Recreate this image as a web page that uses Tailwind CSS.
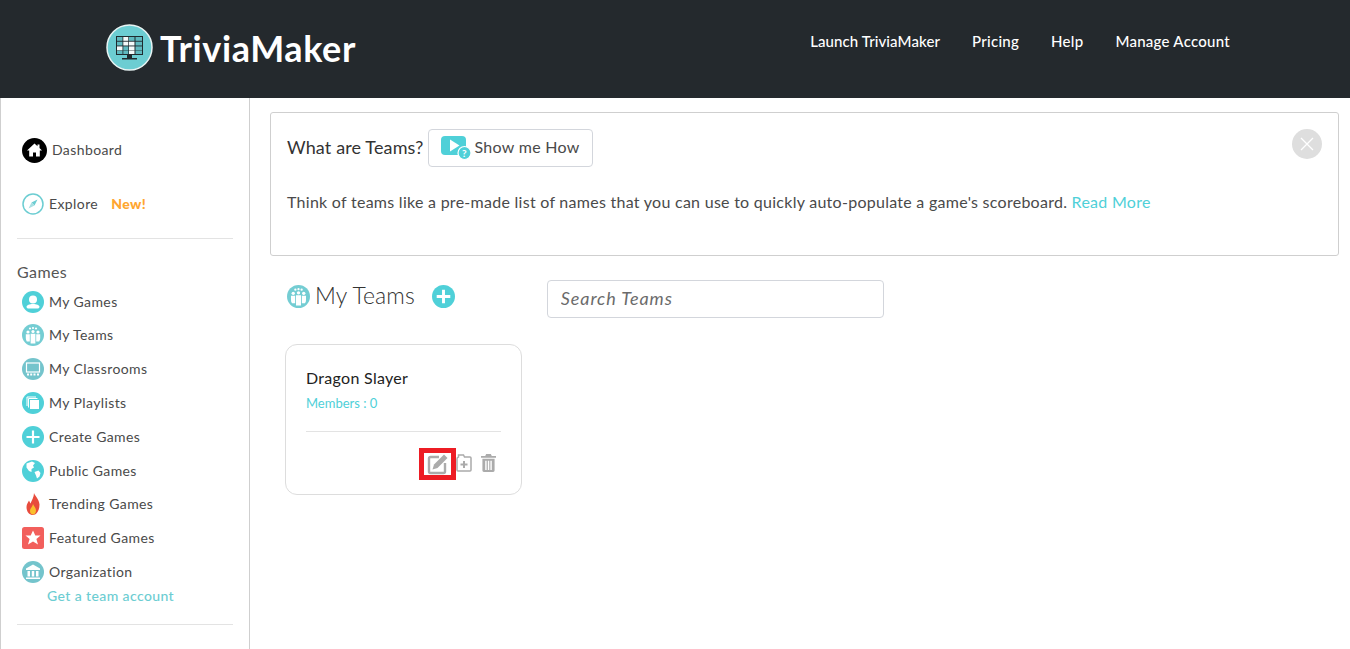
<!DOCTYPE html>
<html lang="en">
<head>
  <meta charset="UTF-8" />
  <title>My Teams - TriviaMaker</title>
  <script src="https://cdn.jsdelivr.net/npm/@tailwindcss/browser@4"></script>
</head>
<body class="h-[649px] overflow-hidden bg-white font-['Lato',sans-serif] text-[#4a4a4a]">

  <!-- Header -->
  <header class="h-[98px] bg-[#24292d] flex items-center justify-between pl-[106px] pr-[120px]">
    <a class="flex items-center gap-[7px] mb-[3px]">
      <svg width="47" height="47" viewBox="0 0 47 47">
        <circle cx="23.5" cy="23.5" r="22.5" fill="#6ccdd2" stroke="#e8f4f4" stroke-width="1.5"/>
        <rect x="10" y="12" width="27" height="19" fill="#1f2a2e"/>
        <g fill="#5fb9bf">
          <rect x="11" y="13" width="5.500" height="3.800"/><rect x="23" y="13" width="5.500" height="3.800"/><rect x="29.500" y="13" width="6.500" height="3.800"/>
          <rect x="11" y="17.700" width="5.500" height="3.800"/><rect x="29.500" y="17.700" width="6.500" height="3.800"/>
          <rect x="17.300" y="22.400" width="5" height="3.800"/><rect x="29.500" y="22.400" width="6.500" height="3.800"/>
          <rect x="11" y="26.500" width="5.500" height="3.500"/><rect x="17.300" y="26.500" width="5" height="3.500"/><rect x="29.500" y="26.500" width="6.500" height="3.500"/>
        </g>
        <g fill="#f4fafa">
          <rect x="17.300" y="13" width="5" height="3.800"/>
          <rect x="17.300" y="17.700" width="5" height="3.800"/><rect x="23" y="17.700" width="5.500" height="3.800"/>
          <rect x="11" y="22.400" width="5.500" height="3.800"/><rect x="23" y="22.400" width="5.500" height="3.800"/>
          <rect x="23" y="26.500" width="5.500" height="3.500"/>
        </g>
        <rect x="21" y="31" width="5" height="3" fill="#1f2a2e"/>
        <rect x="16" y="34" width="15" height="1.500" fill="#1f2a2e"/>
      </svg>
      <span class="text-[36px] font-bold text-white leading-none tracking-[0.6px]">TriviaMaker</span>
    </a>
    <nav class="flex items-center gap-8 text-[15px] font-medium text-white tracking-[0.27px] mb-[15px]">
      <a class="tracking-[0.1px]">Launch TriviaMaker</a>
      <a>Pricing</a>
      <a>Help</a>
      <a>Manage Account</a>
    </nav>
  </header>

  <div class="flex h-[551px]">

    <!-- Sidebar -->
    <aside class="w-[250px] shrink-0 border-l border-r border-[#cfcfcf] pl-[16px] pr-4 text-[14px] tracking-[0.4px]">
      <a class="flex items-center gap-[5px] h-[26px] mt-[39px] pl-[5px]">
        <svg width="25" height="25" viewBox="0 0 25 25"><circle cx="12.500" cy="12.500" r="12.500" fill="#000"/><path d="M12.500 5.500 5 12.500h2.200v6h3.800v-4h3v4h3.800v-6H20l-2.500-2.400V6.500h-2v1.700z" fill="#fff"/></svg>
        <span class="pb-[2px]">Dashboard</span>
      </a>
      <a class="flex items-center gap-[5px] h-[24px] mt-[29px] pl-[5px]">
        <svg width="22" height="22" viewBox="0 0 22 22"><circle cx="11" cy="11" r="10" fill="none" stroke="#6ccdd2" stroke-width="1.500"/><path d="M15.500 6.500 12.500 12.500 9.500 9.500z" fill="#6ccdd2"/><path d="M6.500 15.500 9.500 9.500 12.500 12.500z" fill="#a9e0e3"/></svg>
        <span class="pb-[2px]">Explore</span>
        <span class="ml-[8px] pb-[2px] font-black text-[#ffa630]">New!</span>
      </a>
      <div class="h-px bg-[#e3e3e3] mt-[22px]"></div>
      <h3 class="text-[16px] leading-5 mt-[23px] text-[#555]">Games</h3>

      <ul class="mt-[9px] pl-[5px]">
        <li class="flex items-center gap-[5px] h-[22px]">
          <svg width="22" height="22" viewBox="0 0 22 22"><circle cx="11" cy="11" r="11" fill="#4fd0d8"/><circle cx="11" cy="8.500" r="4" fill="#fff"/><path d="M4.500 16c0-2 3-3 6.500-3s6.500 1 6.500 3c0 .8-1 1.500-2 1.500h-9c-1 0-2-.7-2-1.500z" fill="#fff"/></svg>
          <span class="pb-[2px]">My Games</span>
        </li>
        <li class="flex items-center gap-[5px] h-[22px] mt-[11px]">
          <svg width="22" height="22" viewBox="0 0 22 22"><circle cx="11" cy="11" r="11" fill="#74cdd3"/><g fill="#fff"><circle cx="8" cy="4.500" r="1.100"/><circle cx="11" cy="4" r="1.100"/><circle cx="14" cy="4.500" r="1.100"/><circle cx="6" cy="8" r="1.600"/><circle cx="11" cy="7.500" r="1.600"/><circle cx="16" cy="8" r="1.600"/><path d="M3.800 10.200h4v7.300h-3c-.7-1-1-2.200-1-3.500zM8.600 9.800h4.800v9.700H8.600zM14.200 10.200h4V14c0 1.300-.3 2.500-1 3.500h-3z"/></g></svg>
          <span class="pb-[2px]">My Teams</span>
        </li>
        <li class="flex items-center gap-[5px] h-[22px] mt-[12px]">
          <svg width="22" height="22" viewBox="0 0 22 22"><circle cx="11" cy="11" r="11" fill="#74c4cc"/><rect x="4.500" y="5" width="13" height="9" fill="none" stroke="#fff" stroke-width="1.200"/><path d="M5 15.500h2v2H5zM8.200 15.500h2v2h-2zM11.500 15.500h2v2h-2zM15 15.500h2v2h-2z" fill="#fff"/></svg>
          <span class="pb-[2px]">My Classrooms</span>
        </li>
        <li class="flex items-center gap-[5px] h-[22px] mt-[12px]">
          <svg width="22" height="22" viewBox="0 0 22 22"><circle cx="11" cy="11" r="11" fill="#4fd0d8"/><path d="M5 14V5h9" fill="none" stroke="#fff" stroke-width="1"/><path d="M6.500 15.500V6.500h9" fill="none" stroke="#fff" stroke-width="1"/><rect x="8" y="8" width="9" height="9" fill="#fff"/></svg>
          <span class="pb-[2px]">My Playlists</span>
        </li>
        <li class="flex items-center gap-[5px] h-[22px] mt-[12px]">
          <svg width="22" height="22" viewBox="0 0 22 22"><circle cx="11" cy="11" r="11" fill="#4fd0d8"/><path d="M11 4.500v13M4.500 11h13" stroke="#fff" stroke-width="2.200"/></svg>
          <span class="pb-[2px]">Create Games</span>
        </li>
        <li class="flex items-center gap-[5px] h-[22px] mt-[12px]">
          <svg width="22" height="22" viewBox="0 0 22 22"><circle cx="11" cy="11" r="11" fill="#4fd0d8"/><path d="M4.500 3.500 10 1.500l3 1.500-2 2.500 1 2-2.500 1.500v3L7 11 4.500 7.500zM12.500 12l4-1.500 2 2.500-1 3.500-2.500 2-1-3z" fill="#fff"/></svg>
          <span class="pb-[2px]">Public Games</span>
        </li>
        <li class="flex items-center gap-[5px] h-[22px] mt-[11px]">
          <svg width="22" height="22" viewBox="0 0 22 22"><path d="M12 0c1 3 5 6 5.500 11.500 0 6-3 10.500-6.500 10.500s-6.500-3-6.500-8c0-3 1.500-4.500 2.500-6.500l1.500 3C9.500 7.500 12 4 12 0z" fill="#e84c3d"/><path d="M11 11c.5 2 3 3.500 3 6.500 0 2.500-1.500 4-3 4s-3-1.500-3-3.500c0-3 2.500-4 3-7z" fill="#f9c02d"/></svg>
          <span class="pb-[2px]">Trending Games</span>
        </li>
        <li class="flex items-center gap-[5px] h-[22px] mt-[12px]">
          <svg width="22" height="22" viewBox="0 0 22 22"><rect width="22" height="22" rx="2.500" fill="#f25f5c"/><path d="m11 3.500 2.300 5h5.200l-4.100 3.500 1.600 5.500-5-3.100-5 3.100 1.600-5.500L3.500 8.500h5.200z" fill="#fff"/></svg>
          <span class="pb-[2px]">Featured Games</span>
        </li>
        <li class="flex items-center gap-[5px] h-[22px] mt-[12px]">
          <svg width="22" height="22" viewBox="0 0 22 22"><circle cx="11" cy="11" r="11" fill="#74c4cc"/><path d="M11 3.500 4 7.500v1.500h14V7.500zM5.500 10h2.500v5.500H5.500zM9.800 10h2.400v5.500H9.800zM14 10h2.500v5.500H14zM4 16.500h14v1.500H4z" fill="#fff"/></svg>
          <span class="pb-[2px]">Organization</span>
        </li>
      </ul>
      <a class="block pl-[30px] mt-[4px] leading-[18px] text-[#6ccdd2] font-medium">Get a team account</a>
      <div class="h-px bg-[#e3e3e3] mt-[19px]"></div>
    </aside>

    <!-- Main -->
    <main class="flex-1 pl-5 pr-[11px] pt-[14px]">
      <section class="relative h-[144px] border border-[#cfcfcf] rounded-[3px] pl-4 pt-4">
        <div class="flex items-center gap-[5px]">
          <span class="text-[18px] tracking-[0.13px] text-[#333] pb-[2px]">What are Teams?</span>
          <button class="h-[38px] pl-3 pr-[12px] pb-[2px] flex items-center gap-[3px] border border-[#d3d6dc] rounded-[4px] text-[16px] tracking-[0.3px]">
            <svg class="mt-[2px]" width="30" height="25" viewBox="0 0 30 25"><rect width="25" height="19" rx="4" fill="#4fd0d8"/><path d="M9 3.500v12l9.500-6z" fill="#fff"/><circle cx="23.500" cy="17" r="6.500" fill="#4fd0d8" stroke="#fff" stroke-width="1.200"/><text x="23.500" y="20.500" text-anchor="middle" font-size="10" font-weight="700" fill="#fff">?</text></svg>
            Show me How
          </button>
        </div>
        <p class="mt-[23px] text-[16px] leading-6 tracking-[0.27px]">Think of teams like a pre-made list of names that you can use to quickly auto-populate a game's scoreboard. <a class="text-[#4fd0d8]">Read More</a></p>
        <button class="absolute top-4 right-4 w-[30px] h-[30px] rounded-full bg-[#dedede] flex items-center justify-center">
          <svg width="16" height="16" viewBox="0 0 16 16"><path d="M2 2l12 12M14 2 2 14" stroke="#fff" stroke-width="1.300"/></svg>
        </button>
      </section>

      <div class="flex items-start mt-[24px] pl-[17px]">
        <div class="flex items-center h-[32px]">
          <svg width="23" height="23" viewBox="0 0 22 22"><circle cx="11" cy="11" r="11" fill="#74cdd3"/><g fill="#fff"><circle cx="8" cy="4.500" r="1.100"/><circle cx="11" cy="4" r="1.100"/><circle cx="14" cy="4.500" r="1.100"/><circle cx="6" cy="8" r="1.600"/><circle cx="11" cy="7.500" r="1.600"/><circle cx="16" cy="8" r="1.600"/><path d="M3.800 10.200h4v7.300h-3c-.7-1-1-2.200-1-3.500zM8.600 9.800h4.800v9.700H8.600zM14.200 10.200h4V14c0 1.300-.3 2.500-1 3.500h-3z"/></g></svg>
          <h2 class="ml-[5px] pb-[3px] text-[23px] tracking-[0.1px] font-light text-[#333] leading-7">My Teams</h2>
          <svg class="ml-[17px]" width="23" height="23" viewBox="0 0 22 22"><circle cx="11" cy="11" r="11" fill="#4fd0d8"/><path d="M11 4.500v13M4.500 11h13" stroke="#fff" stroke-width="2.800"/></svg>
        </div>
        <input placeholder="Search Teams" class="ml-[92px] w-[337px] h-[38px] px-[13px] pb-[2px] border border-[#d3d6dc] rounded-[4px] text-[18px] italic tracking-[0.9px] placeholder:text-[#6b6b6b]" />
      </div>

      <article class="w-[237px] h-[151px] mt-[26px] ml-[15px] border border-[#dddddd] rounded-[12px] px-5 pt-[23px]">
        <h4 class="text-[16px] leading-5 tracking-[0.3px] text-[#222]">Dragon Slayer</h4>
        <p class="mt-[6px] text-[13px] leading-[18px] text-[#4fd0d8]">Members : 0</p>
        <div class="h-px bg-[#e3e3e3] mt-[19px]"></div>
        <div class="flex items-start justify-end mt-[16px] mr-[5px]">
          <span class="w-[37px] h-[32px] border-[5px] border-[#ed1c24] flex items-center justify-center">
            <svg width="21" height="21" viewBox="0 0 21 21"><path d="M12 3H3.500A1.500 1.500 0 0 0 2 4.500v13A1.500 1.500 0 0 0 3.500 19h13a1.500 1.500 0 0 0 1.500-1.500V9" fill="none" stroke="#ababab" stroke-width="2.400"/><path d="M17 0.500l3.500 3.500-10 10-5 1.500 1.500-5z" fill="#ababab"/></svg>
          </span>
          <svg class="mt-[6px]" width="16" height="18" viewBox="0 0 16 18"><path d="M2.500 3V1h5l1 2h5.500a1 1 0 0 1 1 1v12a1 1 0 0 1-1 1H2a1 1 0 0 1-1-1V5a2 2 0 0 1 1.500-2z" fill="none" stroke="#ababab" stroke-width="1.500"/><path d="M8 7v7M4.500 10.500h7" stroke="#ababab" stroke-width="2"/></svg>
          <svg class="mt-[6px] ml-[9px]" width="15" height="18" viewBox="0 0 16 19"><path d="M5.500 0h5l1 2H16v2H0V2h4.500zM1.500 5h13v12.500a1.500 1.500 0 0 1-1.500 1.500H3a1.500 1.500 0 0 1-1.500-1.500zM4.500 7v10h1.500V7zM7.300 7v10h1.500V7zM10 7v10h1.500V7z" fill="#ababab" fill-rule="evenodd"/></svg>
        </div>
      </article>
    </main>
  </div>

</body>
</html>
